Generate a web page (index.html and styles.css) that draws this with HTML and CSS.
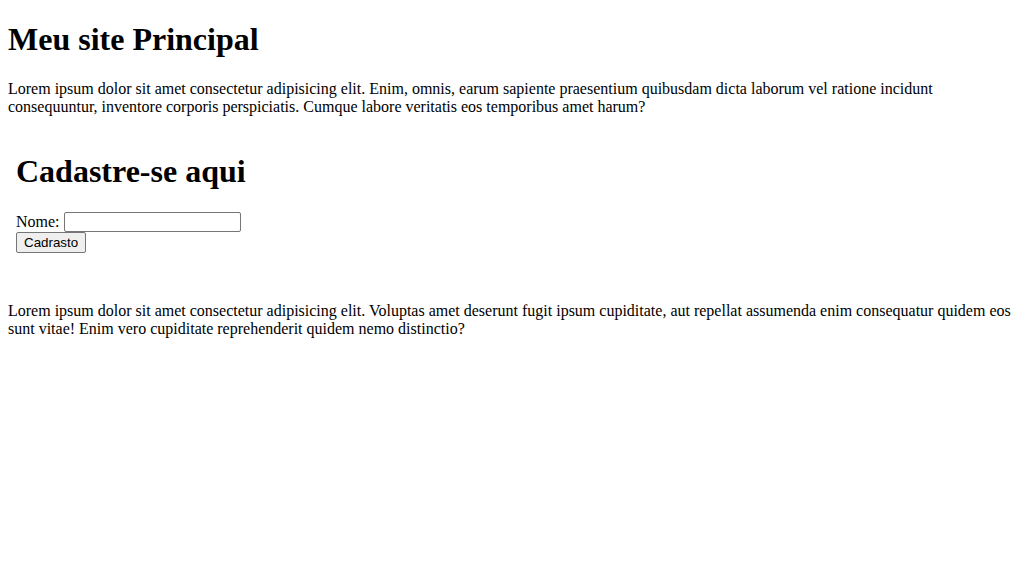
FILE: index.html
```html
<!DOCTYPE html>
<html lang="pt-BR">
<head>
<meta charset="utf-8">
<title>Meu site Principal</title>
<link rel="stylesheet" href="styles.css">
</head>
<body class="page">
<h1 class="title title-main">Meu site Principal</h1>
<p class="text">Lorem ipsum dolor sit amet consectetur adipisicing elit. Enim, omnis, earum sapiente praesentium quibusdam dicta laborum vel ratione incidunt consequuntur, inventore corporis perspiciatis. Cumque labore veritatis eos temporibus amet harum?</p>
<div class="frame"><div class="frame-body">
<h1 class="title">Cadastre-se aqui</h1>
<form class="form">Nome: <input class="field" type="text"><br><button class="btn" type="button">Cadrasto</button></form>
</div></div>
<p class="text">Lorem ipsum dolor sit amet consectetur adipisicing elit. Voluptas amet deserunt fugit ipsum cupiditate, aut repellat assumenda enim consequatur quidem eos sunt vitae! Enim vero cupiditate reprehenderit quidem nemo distinctio?</p>
</body>
</html>
```

FILE: styles.css
```css
html { background: #fff; }
.page {
  margin: 8px;
  font-family: "Liberation Serif", "Times New Roman", serif;
  font-size: 16px;
  color: #000;
}
.title {
  font-size: 32px;
  font-weight: bold;
  margin: 21.44px 0;
}
.title-main { margin-top: 13.44px; }
.text { margin: 16px 0; }
.frame {
  display: inline-block;
  width: 300px;
  height: 150px;
  overflow: hidden;
  vertical-align: baseline;
}
.frame-body { margin: 8px; }
.form { margin: 0; }
.field {
  font-family: "Liberation Sans", Arial, sans-serif;
  font-size: 13.333px;
  width: 177px;
  height: 20px;
  box-sizing: border-box;
  border: 1px solid #767676;
  border-radius: 2px;
  padding: 1px 2px;
  margin: 0;
  vertical-align: baseline;
}
.btn {
  font-family: "Liberation Sans", Arial, sans-serif;
  font-size: 13.333px;
  background: #efefef;
  border: 1px solid #767676;
  border-radius: 2px;
  padding: 2px 7px;
  margin: 0;
  color: #000;
}
```
